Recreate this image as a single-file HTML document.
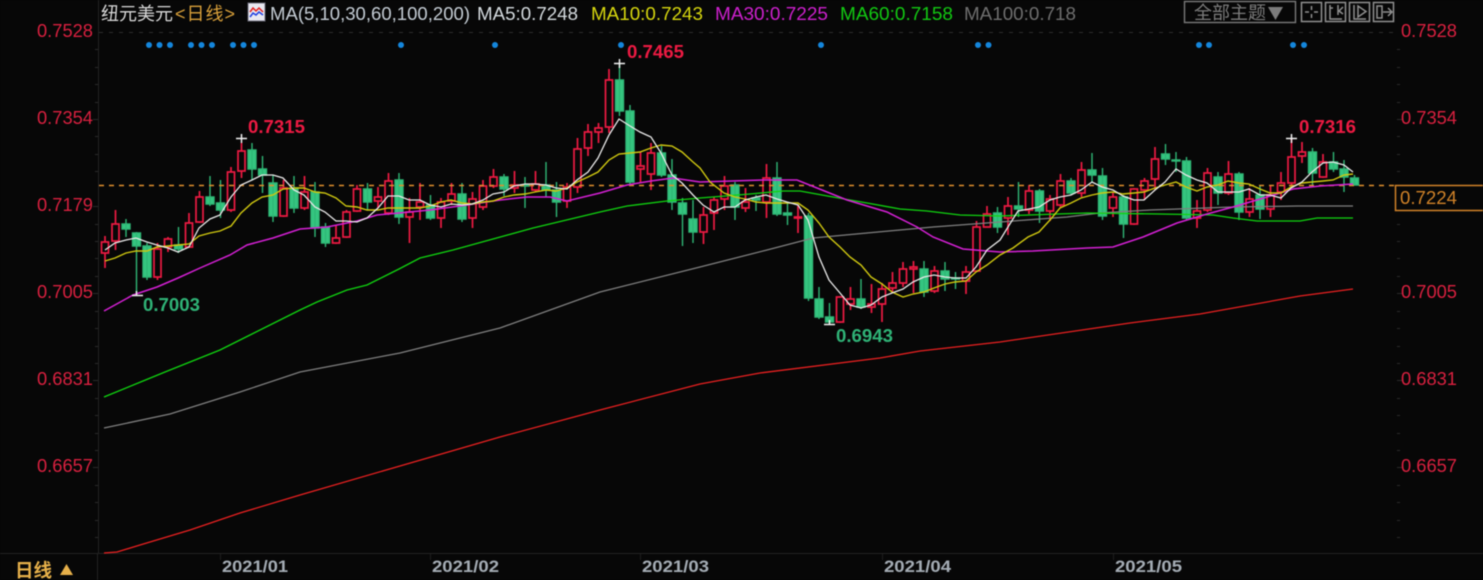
<!DOCTYPE html>
<html><head><meta charset="utf-8"><style>
html,body{margin:0;padding:0;background:#070707;width:1483px;height:580px;overflow:hidden}
svg{display:block;filter:blur(.4px)}
text{font-family:"Liberation Sans","Noto Sans CJK SC",sans-serif}
</style></head><body>
<svg width="1483" height="580" viewBox="0 0 1483 580" xmlns="http://www.w3.org/2000/svg">
<rect width="1483" height="580" fill="#070707"/>
<path d="M98.5 0V553M97.5 554V580M0 553.5H1483" stroke="#222" fill="none"/>
<path d="M220.5 554V560M430.5 554V560M640.5 554V560M882.5 554V560M1113.5 554V560" stroke="#1d1d1d" fill="none"/>
<path d="M93 119.5h5M93 206.5h5M93 293.5h5M93 380.5h5M93 467.5h5M95 49.5h3M95 67.5h3M95 84.5h3M95 102.5h3M95 136.5h3M95 154.5h3M95 171.5h3M95 224.5h3M95 241.5h3M95 258.5h3M95 276.5h3M95 311.5h3M95 328.5h3M95 346.5h3M95 363.5h3M95 398.5h3M95 415.5h3M95 433.5h3M95 450.5h3M95 485.5h3M95 502.5h3M95 520.5h3M95 537.5h3M1397 119.5h5M1397 206.5h5M1397 293.5h5M1397 380.5h5M1397 467.5h5M1397 49.5h3M1397 67.5h3M1397 84.5h3M1397 102.5h3M1397 136.5h3M1397 154.5h3M1397 171.5h3M1397 224.5h3M1397 241.5h3M1397 258.5h3M1397 276.5h3M1397 311.5h3M1397 328.5h3M1397 346.5h3M1397 363.5h3M1397 398.5h3M1397 415.5h3M1397 433.5h3M1397 450.5h3M1397 485.5h3M1397 502.5h3M1397 520.5h3M1397 537.5h3" stroke="#2a2a2a" fill="none"/>
<path d="M99 32.5H1396" stroke="#2c2c2c" stroke-dasharray="4 6" fill="none"/>

<path fill="#35c680" stroke="#2fb776" stroke-width="1.4" d="
M136.5 232V293M132.5 233h8V246h-8z
M126 219V237M122 224h8V229h-8z
M147 243V280M143 246h8V277h-8z
M178.5 227V253M174.5 245h8V249h-8z
M210 176V206M206 197h8V204h-8z
M220.5 180V218M216.5 203h8V210h-8z
M252 143V180M248 150h8V169h-8z
M262.5 156V193M258.5 169h8V175h-8z
M273 175V222M269 183h8V216h-8z
M294 176V213M290 188h8V208h-8z
M315 182V237M311 192h8V228h-8z
M325.5 223V247M321.5 227h8V243h-8z
M367.5 183V210M363.5 189h8V202h-8z
M399 173V224M395 180h8V217h-8z
M430.5 195V220M426.5 205h8V218h-8z
M462 183V222M458 194h8V219h-8z
M504 174V196M500 177h8V189h-8z
M525 177V208M521 185h8V186h-8z
M546 162V197M542 185h8V190h-8z
M556.5 182V217M552.5 190h8V202h-8z
M619.5 63V116M615.5 80h8V111h-8z
M630 105V185M626 111h8V182h-8z
M661.5 146V177M657.5 153h8V175h-8z
M672 159V210M668 175h8V202h-8z
M682.5 198V246M678.5 203h8V214h-8z
M693 200V243M689 219h8V232h-8z
M735 182V220M731 185h8V207h-8z
M756 195V211M752 198h8V200h-8z
M777 162V216M773 178h8V214h-8z
M787.5 203V225M783.5 213h8V215h-8z
M808.5 213V301M804.5 216h8V298h-8z
M819 287V319M815 299h8V317h-8z
M829.5 303V325M825.5 317h8V322h-8z
M861 279V309M857 299h8V307h-8z
M924 261V297M920 269h8V292h-8z
M945 262V291M941 271h8V279h-8z
M955.5 272V289M951.5 278h8V279h-8z
M997.5 207V233M993.5 213h8V227h-8z
M1018.5 182V217M1014.5 206h8V209h-8z
M1039.5 189V223M1035.5 191h8V211h-8z
M1071 178V195M1067 181h8V193h-8z
M1092 153V182M1088 170h8V175h-8z
M1102.5 168V220M1098.5 176h8V216h-8z
M1123.5 195V238M1119.5 197h8V224h-8z
M1165.5 144V165M1161.5 154h8V159h-8z
M1176 152V172M1172 160h8V161h-8z
M1186.5 157V220M1182.5 161h8V218h-8z
M1218 172V205M1214 177h8V193h-8z
M1239 172V220M1235 174h8V212h-8z
M1260 185V219M1256 195h8V209h-8z
M1312.5 148V185M1308.5 152h8V173h-8z
M1333.5 152V172M1329.5 162h8V169h-8z
M1344 160V192M1340 169h8V177h-8z
M1354.5 175V185M1350.5 178h8V185h-8z"/>

<path fill="#070707" stroke="#ec1a42" stroke-width="1.7" d="
M105 236V242M105 253V268M101.5 242h7V253h-7z
M115.5 210V224M115.5 241V250M112 224h7V241h-7z
M157.5 243V249M157.5 277V280M154 249h7V277h-7z
M168 237V239M168 247V252M164.5 239h7V247h-7z
M189 213V223M189 247V248M185.5 223h7V247h-7z
M199.5 191V197M199.5 222V223M196 197h7V222h-7z
M231 167V172M231 210V212M227.5 172h7V210h-7z
M241.5 143V151M241.5 171V178M238 151h7V171h-7z
M283.5 180V188M283.5 216V217M280 188h7V216h-7z
M304.5 176V192M304.5 208V210M301 192h7V208h-7z
M336 225V238M336 243V244M332.5 238h7V243h-7z
M346.5 210V212M346.5 237V238M343 212h7V237h-7z
M357 185V189M357 211V212M353.5 189h7V211h-7z
M378 187V197M378 201V208M374.5 197h7V201h-7z
M388.5 173V181M388.5 213V215M385 181h7V213h-7z
M409.5 198V212M409.5 217V243M406 212h7V217h-7z
M420 183V202M420 207V220M416.5 202h7V207h-7z
M441 198V202M441 218V228M437.5 202h7V218h-7z
M451.5 183V194M451.5 201V205M448 194h7V201h-7z
M472.5 192V199M472.5 218V228M469 199h7V218h-7z
M483 180V186M483 207V210M479.5 186h7V207h-7z
M493.5 169V177M493.5 186V188M490 177h7V186h-7z
M514.5 171V185M514.5 188V193M511 185h7V188h-7z
M535.5 171V184M535.5 190V192M532 184h7V190h-7z
M567 183V187M567 201V208M563.5 187h7V201h-7z
M577.5 138V149M577.5 187V193M574 149h7V187h-7z
M588 124V132M588 148V156M584.5 132h7V148h-7z
M598.5 123V128M598.5 132V143M595 128h7V132h-7z
M609 69V80M609 127V133M605.5 80h7V127h-7z
M640.5 152V166M640.5 169V182M637 166h7V169h-7z
M651 143V153M651 174V190M647.5 153h7V174h-7z
M703.5 207V215M703.5 232V244M700 215h7V232h-7z
M714 197V200M714 213V230M710.5 200h7V213h-7z
M724.5 176V186M724.5 199V210M721 186h7V199h-7z
M745.5 188V202M745.5 208V212M742 202h7V208h-7z
M766.5 164V178M766.5 202V218M763 178h7V202h-7z
M798 205V217M798 218V233M794.5 217h7V218h-7z
M840 296V297M840 322V323M836.5 297h7V322h-7z
M850.5 287V299M850.5 304V310M847 299h7V304h-7z
M871.5 284V304M871.5 307V313M868 304h7V307h-7z
M882 283V289M882 304V322M878.5 289h7V304h-7z
M892.5 272V283M892.5 288V292M889 283h7V288h-7z
M903 262V269M903 283V287M899.5 269h7V283h-7z
M913.5 261V267M913.5 269V293M910 267h7V269h-7z
M934.5 266V271M934.5 291V293M931 271h7V291h-7z
M966 266V272M966 281V294M962.5 272h7V281h-7z
M976.5 221V227M976.5 271V272M973 227h7V271h-7z
M987 206V214M983.5 214h7V227h-7z
M1008 197V206M1008 218V235M1004.5 206h7V218h-7z
M1029 185V191M1029 210V214M1025.5 191h7V210h-7z
M1050 195V199M1050 211V221M1046.5 199h7V211h-7z
M1060.5 174V181M1060.5 205V207M1057 181h7V205h-7z
M1081.5 162V170M1081.5 193V197M1078 170h7V193h-7z
M1113 192V197M1113 208V217M1109.5 197h7V208h-7z
M1134 188V189M1134 224V225M1130.5 189h7V224h-7z
M1144.5 178V181M1144.5 190V200M1141 181h7V190h-7z
M1155 147V159M1155 179V190M1151.5 159h7V179h-7z
M1197 200V211M1197 218V228M1193.5 211h7V218h-7z
M1207.5 168V173M1207.5 210V212M1204 173h7V210h-7z
M1228.5 161V174M1228.5 193V195M1225 174h7V193h-7z
M1249.5 188V199M1249.5 212V217M1246 199h7V212h-7z
M1270.5 185V195M1270.5 209V217M1267 195h7V209h-7z
M1281 172V183M1281 192V200M1277.5 183h7V192h-7z
M1291.5 138V157M1291.5 183V186M1288 157h7V183h-7z
M1302 142V152M1302 156V163M1298.5 152h7V156h-7z
M1323 154V162M1323 177V178M1319.5 162h7V177h-7z"/>

<path d="M99 185.5H1395" stroke="#e0902e" stroke-width="1.5" stroke-dasharray="5 5" fill="none"/>

<polyline fill="none" stroke="#ea2020" stroke-width="1.25" points="104,553 117,552 140,545 190,530 240,513 300,495 400,466 500,437 600,410 700,384 760,373 880,358 920,351 1000,342 1130,323 1200,314 1300,296 1353,289"/>
<polyline fill="none" stroke="#808080" stroke-width="1.25" points="104,428 170,414 240,392 300,372 400,353 500,328 600,292 700,267 767,250 813,238 867,233 933,227 1000,222 1067,217 1100,213 1150,210 1233,207 1297,206 1353,206"/>
<polyline fill="none" stroke="#10d410" stroke-width="1.35" points="104,397 165,372 220,350 250,335 300,310 317,302 347,290 367,285 399,269 420,258 453,250 533,228 600,212 627,206 667,201 700,198 750,194 783,191 800,191 833,197 867,203 900,209 927,211 960,215 1000,216 1087,213 1160,214 1213,215 1233,218 1257,221 1300,221 1317,218 1353,218"/>
<polyline fill="none" stroke="#d420d4" stroke-width="1.5" points="104,311 133,295 157,287 178,278 200,268 230,255 247,245 273,238 300,229 327,227 357,221 377,215 399,213 430,210 467,205 500,200 527,197 550,197 567,201 600,193 627,185 651,181 673,178 700,182 763,180 797,180 817,188 847,200 887,212 917,227 933,237 963,249 1000,252 1033,251 1087,248 1113,247 1143,237 1177,223 1207,214 1233,207 1267,197 1293,189 1320,186 1353,184"/>
<polyline fill="none" stroke="#d0c810" stroke-width="1.4" points="105,261 115,258 126,253 136,251 147,251 157,247 168,246 178,245 189,244 199,236 210,233 220,231 231,226 241,213 252,203 262,197 273,195 283,189 294,188 304,188 315,192 325,193 336,198 346,206 357,207 367,210 378,210 388,208 399,208 420,208 430,206 441,202 451,200 462,203 472,204 483,202 493,201 504,197 514,195 525,194 535,192 546,190 556,191 567,188 577,182 588,177 598,172 609,160 619,154 630,153 640,152 651,148 661,145 672,146 682,152 693,162 700,168 710,182 724,193 735,197 745,199 756,202 766,203 777,203 798,203 808,210 819,223 829,237 840,247 850,257 861,265 871,277 882,284 892,292 903,297 913,294 924,292 934,288 945,284 955,282 966,281 976,272 987,265 1000,255 1013,248 1028,237 1039,232 1050,220 1060,208 1071,203 1081,198 1092,195 1102,193 1113,192 1123,194 1134,193 1144,192 1155,188 1165,185 1176,182 1186,187 1197,191 1207,187 1218,185 1228,181 1239,183 1249,184 1260,189 1270,193 1281,193 1291,187 1302,183 1312,182 1323,181 1333,180 1344,175 1353,174"/>
<polyline fill="none" stroke="#e8e8e8" stroke-width="1.3" points="105,250 115,243 126,240 136,238 147,242 157,245 168,248 178,252 189,247 199,228 210,219 220,215 231,197 241,185 252,180 262,175 273,175 283,178 294,190 304,195 315,207 325,212 336,221 346,221 357,222 367,218 378,208 388,196 399,196 409,200 420,200 430,205 441,207 451,204 462,205 472,204 483,200 493,194 504,192 514,186 525,184 535,184 546,185 556,188 567,189 577,180 588,172 598,158 609,135 619,119 630,126 640,132 651,137 661,153 672,175 682,183 693,195 703,205 714,212 724,207 735,207 745,200 756,197 766,195 777,199 787,202 798,205 808,220 819,257 829,280 840,293 850,305 861,308 871,305 882,297 892,293 903,289 913,282 924,277 934,275 945,277 955,278 966,278 976,267 987,250 1000,240 1008,227 1018,211 1029,209 1039,207 1050,200 1060,197 1071,195 1081,190 1092,182 1102,187 1113,190 1123,196 1134,200 1144,200 1155,190 1165,182 1176,169 1186,175 1197,180 1207,183 1218,192 1228,192 1239,192 1249,189 1260,195 1270,195 1281,198 1291,188 1302,182 1312,172 1323,163 1333,162 1344,165 1353,172"/>

<path d="M236 138.5h11M241.5 134v9M614 63.5h11M619.5 59v9M1286 138.5h11M1291.5 134v9M132 295.5h11M136.5 291v5M824 324.5h11M829.5 320v5" stroke="#f0f0f0" stroke-width="1.5" fill="none"/>

<g fill="#1486dc">
<circle cx="149" cy="45" r="3"/><circle cx="159.5" cy="45" r="3"/><circle cx="170" cy="45" r="3"/>
<circle cx="191" cy="45" r="3"/><circle cx="201.5" cy="45" r="3"/><circle cx="212" cy="45" r="3"/>
<circle cx="233" cy="45" r="3"/><circle cx="243.5" cy="45" r="3"/><circle cx="254" cy="45" r="3"/>
<circle cx="401" cy="45" r="3"/><circle cx="495" cy="45" r="3"/><circle cx="621" cy="45" r="3"/><circle cx="821" cy="45" r="3"/>
<circle cx="978" cy="45" r="3"/><circle cx="988.5" cy="45" r="3"/><circle cx="1199" cy="45" r="3"/><circle cx="1209" cy="45" r="3"/><circle cx="1293" cy="45" r="3"/><circle cx="1304" cy="45" r="3"/>
</g>

<g fill="#d8203f" font-size="18">
<text x="37" y="37" textLength="56" lengthAdjust="spacingAndGlyphs">0.7528</text>
<text x="37" y="124" textLength="56" lengthAdjust="spacingAndGlyphs">0.7354</text>
<text x="37" y="211" textLength="56" lengthAdjust="spacingAndGlyphs">0.7179</text>
<text x="37" y="298" textLength="56" lengthAdjust="spacingAndGlyphs">0.7005</text>
<text x="37" y="385" textLength="56" lengthAdjust="spacingAndGlyphs">0.6831</text>
<text x="37" y="472" textLength="56" lengthAdjust="spacingAndGlyphs">0.6657</text>
<text x="1401" y="37" textLength="56" lengthAdjust="spacingAndGlyphs">0.7528</text>
<text x="1401" y="124" textLength="56" lengthAdjust="spacingAndGlyphs">0.7354</text>
<text x="1401" y="211" textLength="56" lengthAdjust="spacingAndGlyphs">0.7179</text>
<text x="1401" y="298" textLength="56" lengthAdjust="spacingAndGlyphs">0.7005</text>
<text x="1401" y="385" textLength="56" lengthAdjust="spacingAndGlyphs">0.6831</text>
<text x="1401" y="472" textLength="56" lengthAdjust="spacingAndGlyphs">0.6657</text>
</g>

<g font-size="18" font-weight="bold">
<text x="248" y="133" fill="#ec1a42" textLength="57" lengthAdjust="spacingAndGlyphs">0.7315</text>
<text x="627" y="58" fill="#ec1a42" textLength="57" lengthAdjust="spacingAndGlyphs">0.7465</text>
<text x="1299" y="133" fill="#ec1a42" textLength="57" lengthAdjust="spacingAndGlyphs">0.7316</text>
<text x="143" y="311" fill="#2fb276" textLength="57" lengthAdjust="spacingAndGlyphs">0.7003</text>
<text x="836" y="342" fill="#2fb276" textLength="57" lengthAdjust="spacingAndGlyphs">0.6943</text>
</g>

<rect x="1395.5" y="185.5" width="90" height="25" fill="#070707" stroke="#d08228" stroke-width="1.5"/>
<text x="1400" y="204" fill="#d08228" font-size="18" textLength="57" lengthAdjust="spacingAndGlyphs">0.7224</text>

<text x="101" y="20" fill="#d8d8d8" font-size="18">纽元美元</text>
<text x="175" y="20" fill="#d9a03a" font-size="18" textLength="60">&lt;日线&gt;</text>
<rect x="248" y="3" width="17" height="18" fill="#e8e8f0" stroke="#6a6a78"/>
<path d="M250 12l3-4 3 3 3-3 4 4" stroke="#e02020" stroke-width="1.5" fill="none"/>
<path d="M250 17l3-4 3 2 3-3 4 3" stroke="#2040e0" stroke-width="1.5" fill="none"/>
<g font-size="18">
<text x="270" y="20" fill="#c4ccd4" textLength="200" lengthAdjust="spacingAndGlyphs">MA(5,10,30,60,100,200)</text>
<text x="477" y="20" fill="#d4dade" textLength="101" lengthAdjust="spacingAndGlyphs">MA5:0.7248</text>
<text x="591" y="20" fill="#d6d60e" textLength="112" lengthAdjust="spacingAndGlyphs">MA10:0.7243</text>
<text x="715" y="20" fill="#cc20cc" textLength="113" lengthAdjust="spacingAndGlyphs">MA30:0.7225</text>
<text x="840" y="20" fill="#12c812" textLength="113" lengthAdjust="spacingAndGlyphs">MA60:0.7158</text>
<text x="964" y="20" fill="#6e6e6e" textLength="112" lengthAdjust="spacingAndGlyphs">MA100:0.718</text>
</g>

<rect x="1184.5" y="1.5" width="111" height="21" fill="none" stroke="#7a7a7a" stroke-width="1.4"/>
<text x="1194" y="19" fill="#7c7c7c" font-size="18">全部主题</text>
<path d="M1268 7h15l-7.5 13z" fill="#7c7c7c"/>
<g fill="none" stroke="#909090" stroke-width="1.5">
<rect x="1301.5" y="2.5" width="20" height="19"/>
<rect x="1325.5" y="2.5" width="20" height="19"/>
<rect x="1349.5" y="2.5" width="20" height="19"/>
<rect x="1373.5" y="2.5" width="20" height="19"/>
<path d="M1311.5 6v4M1311.5 14v4M1305 12h4M1314 12h4"/>
<path d="M1330 5v14h12M1330 8h3M1338 5v10M1343 7l-4 4 4 3"/>
<path d="M1354 5v14h12M1358 6v11l8-5.5z"/>
<path d="M1377 6h5v12h-5zM1383 12h8M1388 8l4 4-4 4"/>
</g>

<text x="15" y="577" fill="#e6b04a" font-size="18.5" font-weight="bold">日线</text>
<path d="M60 575l6.5-11 6.5 11z" fill="#e6b04a"/>
<g fill="#a4acb4" font-size="17" font-weight="bold">
<text x="222" y="572" textLength="66" lengthAdjust="spacingAndGlyphs">2021/01</text>
<text x="432" y="572" textLength="67" lengthAdjust="spacingAndGlyphs">2021/02</text>
<text x="642" y="572" textLength="67" lengthAdjust="spacingAndGlyphs">2021/03</text>
<text x="884" y="572" textLength="67" lengthAdjust="spacingAndGlyphs">2021/04</text>
<text x="1115" y="572" textLength="67" lengthAdjust="spacingAndGlyphs">2021/05</text>
</g>
</svg>
</body></html>
